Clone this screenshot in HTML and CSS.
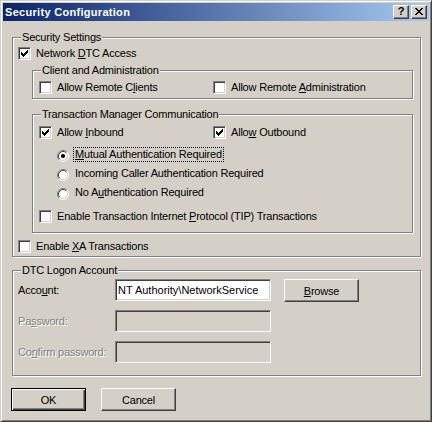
FILE: index.html
```html
<!DOCTYPE html>
<html>
<head>
<meta charset="utf-8">
<title>Security Configuration</title>
<link rel="stylesheet" href="styles.css">
</head>
<body>
<div class="window">
  <div class="titlebar">
    <span class="title">Security Configuration</span>
    <div class="caption-buttons">
      <div class="cap-btn help">?</div>
      <div class="cap-btn close"><svg width="8" height="7" viewBox="0 0 8 7" shape-rendering="crispEdges"><path d="M0 0h2v1H0zM6 0h2v1H6zM1 1h2v1H1zM5 1h2v1H5zM2 2h4v1H2zM3 3h2v1H3zM2 4h4v1H2zM1 5h2v1H1zM5 5h2v1H5zM0 6h2v1H0zM6 6h2v1H6z" fill="#000"/></svg></div>
    </div>
  </div>
  <div class="client">
    <div class="group g-security">
      <span class="legend">Security Settings</span>
      <div class="row r-dtc">
        <span class="cb"><svg width="7" height="7" viewBox="0 0 7 7" shape-rendering="crispEdges"><path d="M0 2h1v3H0zM1 3h1v3H1zM2 4h1v3H2zM3 3h1v3H3zM4 2h1v3H4zM5 1h1v3H5zM6 0h1v3H6z" fill="#000"/></svg></span>
        <span class="lbl">Network <u>D</u>TC Access</span>
      </div>
      <div class="group g-client">
        <span class="legend">Client and Administration</span>
        <div class="row pair">
          <div class="item first"><span class="cb"></span><span class="lbl">Allow Remote C<u>l</u>ients</span></div>
          <div class="item"><span class="cb"></span><span class="lbl">Allow Remote <u>A</u>dministration</span></div>
        </div>
      </div>
      <div class="group g-tm">
        <span class="legend">Transaction Manager Communication</span>
        <div class="row pair inbound">
          <div class="item first"><span class="cb"><svg width="7" height="7" viewBox="0 0 7 7" shape-rendering="crispEdges"><path d="M0 2h1v3H0zM1 3h1v3H1zM2 4h1v3H2zM3 3h1v3H3zM4 2h1v3H4zM5 1h1v3H5zM6 0h1v3H6z" fill="#000"/></svg></span><span class="lbl">Allow <u>I</u>nbound</span></div>
          <div class="item"><span class="cb"><svg width="7" height="7" viewBox="0 0 7 7" shape-rendering="crispEdges"><path d="M0 2h1v3H0zM1 3h1v3H1zM2 4h1v3H2zM3 3h1v3H3zM4 2h1v3H4zM5 1h1v3H5zM6 0h1v3H6z" fill="#000"/></svg></span><span class="lbl">Allo<u>w</u> Outbound</span></div>
        </div>
        <div class="radios">
          <div class="rrow">
            <svg class="radio" width="12" height="12" viewBox="0 0 12 12"><circle cx="6" cy="6" r="5" fill="#fff"/><path d="M2.11 9.89A5.5 5.5 0 0 1 9.89 2.11" fill="none" stroke="#808080"/><path d="M9.89 2.11A5.5 5.5 0 0 1 2.11 9.89" fill="none" stroke="#fff"/><path d="M2.82 9.18A4.5 4.5 0 0 1 9.18 2.82" fill="none" stroke="#404040"/><path d="M9.18 2.82A4.5 4.5 0 0 1 2.82 9.18" fill="none" stroke="#d4d0c8"/><circle cx="6" cy="6" r="2.1" fill="#000"/></svg>
            <span class="rlbl focus"><u>M</u>utual Authentication Required</span>
          </div>
          <div class="rrow">
            <svg class="radio" width="12" height="12" viewBox="0 0 12 12"><circle cx="6" cy="6" r="5" fill="#fff"/><path d="M2.11 9.89A5.5 5.5 0 0 1 9.89 2.11" fill="none" stroke="#808080"/><path d="M9.89 2.11A5.5 5.5 0 0 1 2.11 9.89" fill="none" stroke="#fff"/><path d="M2.82 9.18A4.5 4.5 0 0 1 9.18 2.82" fill="none" stroke="#404040"/><path d="M9.18 2.82A4.5 4.5 0 0 1 2.82 9.18" fill="none" stroke="#d4d0c8"/></svg>
            <span class="rlbl">Incoming Caller Authentication Required</span>
          </div>
          <div class="rrow">
            <svg class="radio" width="12" height="12" viewBox="0 0 12 12"><circle cx="6" cy="6" r="5" fill="#fff"/><path d="M2.11 9.89A5.5 5.5 0 0 1 9.89 2.11" fill="none" stroke="#808080"/><path d="M9.89 2.11A5.5 5.5 0 0 1 2.11 9.89" fill="none" stroke="#fff"/><path d="M2.82 9.18A4.5 4.5 0 0 1 9.18 2.82" fill="none" stroke="#404040"/><path d="M9.18 2.82A4.5 4.5 0 0 1 2.82 9.18" fill="none" stroke="#d4d0c8"/></svg>
            <span class="rlbl">No A<u>u</u>thentication Required</span>
          </div>
        </div>
        <div class="row r-tip">
          <span class="cb"></span>
          <span class="lbl">Enable Transaction Internet <u>P</u>rotocol (TIP) Transactions</span>
        </div>
      </div>
      <div class="row r-xa">
        <span class="cb"></span>
        <span class="lbl">Enable <u>X</u>A Transactions</span>
      </div>
    </div>

    <div class="group g-logon">
      <span class="legend">DTC Logon Account</span>
      <div class="frow first">
        <span class="flabel">Acco<u>u</u>nt:</span>
        <div class="edit">NT Authority\NetworkService</div>
        <div class="btn browse"><span><u>B</u>rowse</span></div>
      </div>
      <div class="frow">
        <span class="flabel disabled">Pa<u>s</u>sword:</span>
        <div class="edit off"></div>
      </div>
      <div class="frow">
        <span class="flabel disabled">Co<u>n</u>firm password:</span>
        <div class="edit off"></div>
      </div>
    </div>

    <div class="footer">
      <div class="btn default">OK</div>
      <div class="btn">Cancel</div>
    </div>
  </div>
</div>
</body>
</html>
```

FILE: styles.css
```css
* { box-sizing: border-box; }
html, body { margin: 0; padding: 0; }
body {
  background: #d4d0c8;
  font-family: "Liberation Sans", Arial, sans-serif;
  font-size: 11px;
  letter-spacing: -0.2px;
  color: #000;
}
u { text-underline-offset: 1px; }

.window {
  width: 432px;
  height: 422px;
  border: 1px solid;
  border-color: #d4d0c8 #404040 #404040 #d4d0c8;
  box-shadow: inset 1px 1px 0 #fff, inset -1px -1px 0 #808080;
  padding: 2px;
  background: #d4d0c8;
  display: flex;
  flex-direction: column;
}

.titlebar {
  height: 18px;
  flex: none;
  margin-bottom: 1px;
  background: linear-gradient(to right, #0a246a, #a6caf0);
  display: flex;
  align-items: center;
  padding: 0 2px;
}
.title {
  color: #fff;
  font-weight: bold;
  letter-spacing: 0.3px;
  white-space: nowrap;
}
.caption-buttons {
  margin-left: auto;
  display: flex;
  gap: 2px;
}
.cap-btn {
  width: 16px;
  height: 14px;
  background: #d4d0c8;
  border: 1px solid;
  border-color: #fff #404040 #404040 #fff;
  box-shadow: inset -1px -1px 0 #808080;
  display: flex;
  align-items: center;
  justify-content: center;
  font-weight: bold;
  font-size: 11px;
  letter-spacing: 0;
  line-height: 1;
}
.cap-btn.help { padding-bottom: 1px; }
.cap-btn svg { display: block; margin-top: -1px; }

.client {
  flex: 1;
  padding: 15px 8px 0 9px;
}

.group {
  position: relative;
  border: 1px solid #808080;
  box-shadow: inset 1px 1px 0 #fff, 1px 1px 0 #fff;
}
.legend {
  position: absolute;
  top: -7px;
  left: 8px;
  padding: 0 1px;
  background: #d4d0c8;
  line-height: 13px;
  white-space: nowrap;
}

.row { display: flex; align-items: center; height: 13px; }
.item { display: flex; align-items: center; }
.item.first { width: 174px; }

.cb {
  width: 13px;
  height: 13px;
  flex: none;
  background: #fff;
  border: 1px solid;
  border-color: #808080 #fff #fff #808080;
  box-shadow: inset 1px 1px 0 #404040, inset -1px -1px 0 #d4d0c8;
  padding: 2px;
  display: flex;
}
.cb svg { display: block; }
.lbl {
  margin-left: 5px;
  line-height: 13px;
  white-space: nowrap;
}

.g-security { height: 220px; }
.r-dtc { margin: 9px 0 0 5px; }

.g-client { margin: 10px 0 0 19px; width: 381px; height: 29px; }
.pair { margin: 10px 0 0 6px; }

.g-tm { margin: 15px 0 0 19px; width: 381px; height: 119px; }
.pair.inbound { margin-top: 11px; }

.radios { margin: 8px 0 0 24px; }
.rrow { height: 19px; display: flex; align-items: flex-start; }
.radio { display: block; flex: none; margin-top: 3px; }
.rlbl {
  margin-left: 4px;
  padding: 0 1px;
  border: 1px solid transparent;
  line-height: 13px;
  white-space: nowrap;
}
.rlbl.focus { border: 1px dotted #000; }

.r-tip { margin: 6px 0 0 6px; }
.r-xa { margin: 7px 0 0 5px; }

.g-logon { margin-top: 13px; height: 106px; }
.frow {
  display: flex;
  align-items: center;
  height: 22px;
  margin: 9px 0 0 5px;
}
.frow.first { margin-top: 8px; }
.flabel { width: 97px; flex: none; white-space: nowrap; }
.disabled { color: #808080; text-shadow: 1px 1px 0 #fff; }
.edit {
  width: 156px;
  height: 22px;
  flex: none;
  background: #fff;
  border: 1px solid;
  border-color: #808080 #fff #fff #808080;
  box-shadow: inset 1px 1px 0 #404040, inset -1px -1px 0 #d4d0c8;
  padding: 0 2px;
  line-height: 20px;
  letter-spacing: 0;
  white-space: nowrap;
  overflow: hidden;
}
.edit.off { background: #d4d0c8; }

.btn {
  width: 75px;
  height: 23px;
  flex: none;
  background: #d4d0c8;
  border: 1px solid;
  border-color: #fff #404040 #404040 #fff;
  box-shadow: inset -1px -1px 0 #808080;
  display: flex;
  align-items: center;
  justify-content: center;
  white-space: nowrap;
}
.btn.default {
  border-color: #000;
  box-shadow: inset 1px 1px 0 #fff, inset -1px -1px 0 #404040, inset -2px -2px 0 #808080;
}
.browse { margin-left: 13px; align-self: flex-start; }

.footer {
  display: flex;
  gap: 15px;
  margin: 12px 0 0 -1px;
}
```
